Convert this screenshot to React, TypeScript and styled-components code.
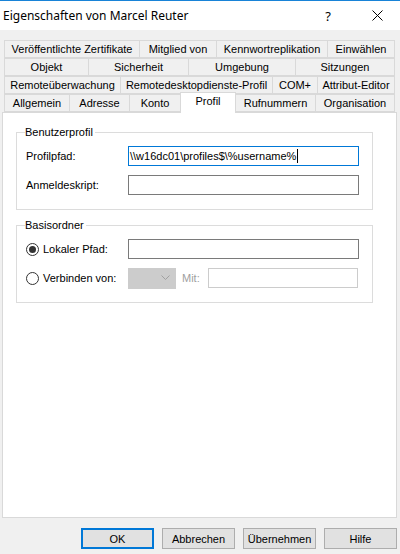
import styled, { createGlobalStyle } from "styled-components";

const GlobalStyle = createGlobalStyle`
  html, body {
    margin: 0;
    padding: 0;
    background: #f0f0f0;
  }
  * {
    box-sizing: border-box;
  }
`;

const StyledWindow = styled.div`
  width: 400px;
  height: 554px;
  display: flex;
  flex-direction: column;
  background: #f0f0f0;
  font-family: "Liberation Sans", Arial, sans-serif;
  font-size: 11px;
  color: #000;
  overflow: hidden;
`;

const StyledTitleBar = styled.div`
  height: 30px;
  background: #fff;
  border-top: 1px solid #1883d7;
  display: flex;
  align-items: center;
  padding-left: 3px;
  font-family: "Noto Sans", sans-serif;
  font-size: 12px;

  & .title {
    flex: 1;
  }
  & .help {
    width: 46px;
    text-align: center;
    font-size: 13px;
    margin-right: 3px;
  }
  & .close {
    width: 46px;
    display: flex;
    justify-content: center;
  }
`;

const StyledTabs = styled.div`
  margin: 10px 0 0 4px;
  width: 391px;
  display: flex;
  flex-direction: column;
`;

const StyledTabRow = styled.div`
  display: flex;
  align-items: flex-end;
  height: 18px;
`;

const StyledTab = styled.div<{ $w: number; $active?: boolean }>`
  width: ${(p) => p.$w}px;
  height: ${(p) => (p.$active ? 21 : 18)}px;
  margin-bottom: ${(p) => (p.$active ? -1 : 0)}px;
  margin-left: -1px;
  position: relative;
  z-index: ${(p) => (p.$active ? 1 : 0)};
  display: flex;
  align-items: ${(p) => (p.$active ? "flex-start" : "center")};
  padding-top: ${(p) => (p.$active ? 2 : 0)}px;
  justify-content: center;
  white-space: nowrap;
  background: ${(p) => (p.$active ? "#fff" : "#f0f0f0")};
  border: 1px solid #d9d9d9;
  border-bottom: ${(p) => (p.$active ? "none" : "1px solid #d9d9d9")};

  &:first-child {
    margin-left: 0;
  }
`;

const StyledPanel = styled.div`
  margin-left: 2px;
  width: 395px;
  height: 406px;
  background: #fff;
  border: 1px solid #d9d9d9;
  padding: 13px 0 0 13px;
  display: flex;
  flex-direction: column;
  gap: 9px;
`;

const StyledGroup = styled.fieldset`
  margin: 0;
  width: 357px;
  border: 1px solid #dcdcdc;
  padding: 8px 12px 14px 9px;
  display: flex;
  flex-direction: column;
  gap: 9px;

  & legend {
    padding: 0 2px 0 0;
    margin-left: -1px;
    line-height: 12px;
  }
`;

const StyledRow = styled.div`
  display: flex;
  align-items: center;
  height: 20px;
`;

const StyledLabel = styled.div`
  width: 102px;
  display: flex;
  align-items: center;
  gap: 4px;
  white-space: nowrap;
`;

const StyledField = styled.div<{ $state?: "focus" | "disabled"; $w?: number }>`
  width: ${(p) => p.$w ?? 231}px;
  height: 20px;
  border: 1px solid
    ${(p) =>
      p.$state === "focus"
        ? "#0078d7"
        : p.$state === "disabled"
        ? "#cccccc"
        : "#7a7a7a"};
  background: #fff;
  display: flex;
  align-items: center;
  padding-left: 1px;
  white-space: nowrap;
  overflow: hidden;
`;

const StyledCaret = styled.span`
  display: inline-block;
  width: 1px;
  height: 14px;
  background: #000;
  margin-left: 1px;
`;

const StyledRadio = styled.span<{ $checked?: boolean }>`
  width: 13px;
  height: 13px;
  border-radius: 50%;
  border: 1px solid #333;
  background: #fff;
  display: inline-flex;
  align-items: center;
  justify-content: center;

  &::after {
    content: "";
    width: 7px;
    height: 7px;
    border-radius: 50%;
    background: ${(p) => (p.$checked ? "#333" : "transparent")};
  }
`;

const StyledCombo = styled.div`
  width: 48px;
  height: 21px;
  background: #cccccc;
  border: 1px solid #cccccc;
  display: flex;
  align-items: center;
  justify-content: flex-end;
  padding-right: 5px;
`;

const StyledMuted = styled.span`
  color: #a0a0a0;
  margin: 0 8px 0 6px;
`;

const StyledButtons = styled.div`
  margin-top: 10px;
  padding-right: 3px;
  display: flex;
  justify-content: flex-end;
  gap: 8px;
`;

const StyledButton = styled.div<{ $default?: boolean }>`
  width: 73px;
  height: 21px;
  background: #e1e1e1;
  border: ${(p) => (p.$default ? "2px solid #0078d7" : "1px solid #adadad")};
  display: flex;
  align-items: center;
  justify-content: center;
`;

const tabRows: [string, number][][] = [
  [
    ["Veröffentlichte Zertifikate", 136],
    ["Mitglied von", 78],
    ["Kennwortreplikation", 112],
    ["Einwählen", 68],
  ],
  [
    ["Objekt", 85],
    ["Sicherheit", 101],
    ["Umgebung", 108],
    ["Sitzungen", 100],
  ],
  [
    ["Remoteüberwachung", 117],
    ["Remotedesktopdienste-Profil", 153],
    ["COM+", 46],
    ["Attribut-Editor", 78],
  ],
  [
    ["Allgemein", 66],
    ["Adresse", 61],
    ["Konto", 52],
    ["Profil", 56],
    ["Rufnummern", 81],
    ["Organisation", 80],
  ],
];

export default function App() {
  return (
    <>
      <GlobalStyle />
      <StyledWindow>
        <StyledTitleBar>
          <span className="title">Eigenschaften von Marcel Reuter</span>
          <span className="help">?</span>
          <span className="close">
            <svg width="11" height="11" viewBox="0 0 11 11">
              <path d="M0.5 0.5 L10.5 10.5 M10.5 0.5 L0.5 10.5" stroke="#000" strokeWidth="1" />
            </svg>
          </span>
        </StyledTitleBar>

        <StyledTabs>
          {tabRows.map((row, i) => (
            <StyledTabRow key={i}>
              {row.map(([name, w]) => (
                <StyledTab key={name} $w={w} $active={name === "Profil"}>
                  {name}
                </StyledTab>
              ))}
            </StyledTabRow>
          ))}
        </StyledTabs>

        <StyledPanel>
          <StyledGroup>
            <legend>Benutzerprofil</legend>
            <StyledRow>
              <StyledLabel>Profilpfad:</StyledLabel>
              <StyledField $state="focus">
                \\w16dc01\profiles$\%username%
                <StyledCaret />
              </StyledField>
            </StyledRow>
            <StyledRow>
              <StyledLabel>Anmeldeskript:</StyledLabel>
              <StyledField />
            </StyledRow>
          </StyledGroup>

          <StyledGroup>
            <legend>Basisordner</legend>
            <StyledRow>
              <StyledLabel>
                <StyledRadio $checked />
                Lokaler Pfad:
              </StyledLabel>
              <StyledField />
            </StyledRow>
            <StyledRow>
              <StyledLabel>
                <StyledRadio />
                Verbinden von:
              </StyledLabel>
              <StyledCombo>
                <svg width="9" height="6" viewBox="0 0 9 6">
                  <polyline points="0.5,0.5 4.5,4.5 8.5,0.5" fill="none" stroke="#a0a0a0" strokeWidth="1" />
                </svg>
              </StyledCombo>
              <StyledMuted>Mit:</StyledMuted>
              <StyledField $state="disabled" $w={150} />
            </StyledRow>
          </StyledGroup>
        </StyledPanel>

        <StyledButtons>
          <StyledButton $default>OK</StyledButton>
          <StyledButton>Abbrechen</StyledButton>
          <StyledButton>Übernehmen</StyledButton>
          <StyledButton>Hilfe</StyledButton>
        </StyledButtons>
      </StyledWindow>
    </>
  );
}
